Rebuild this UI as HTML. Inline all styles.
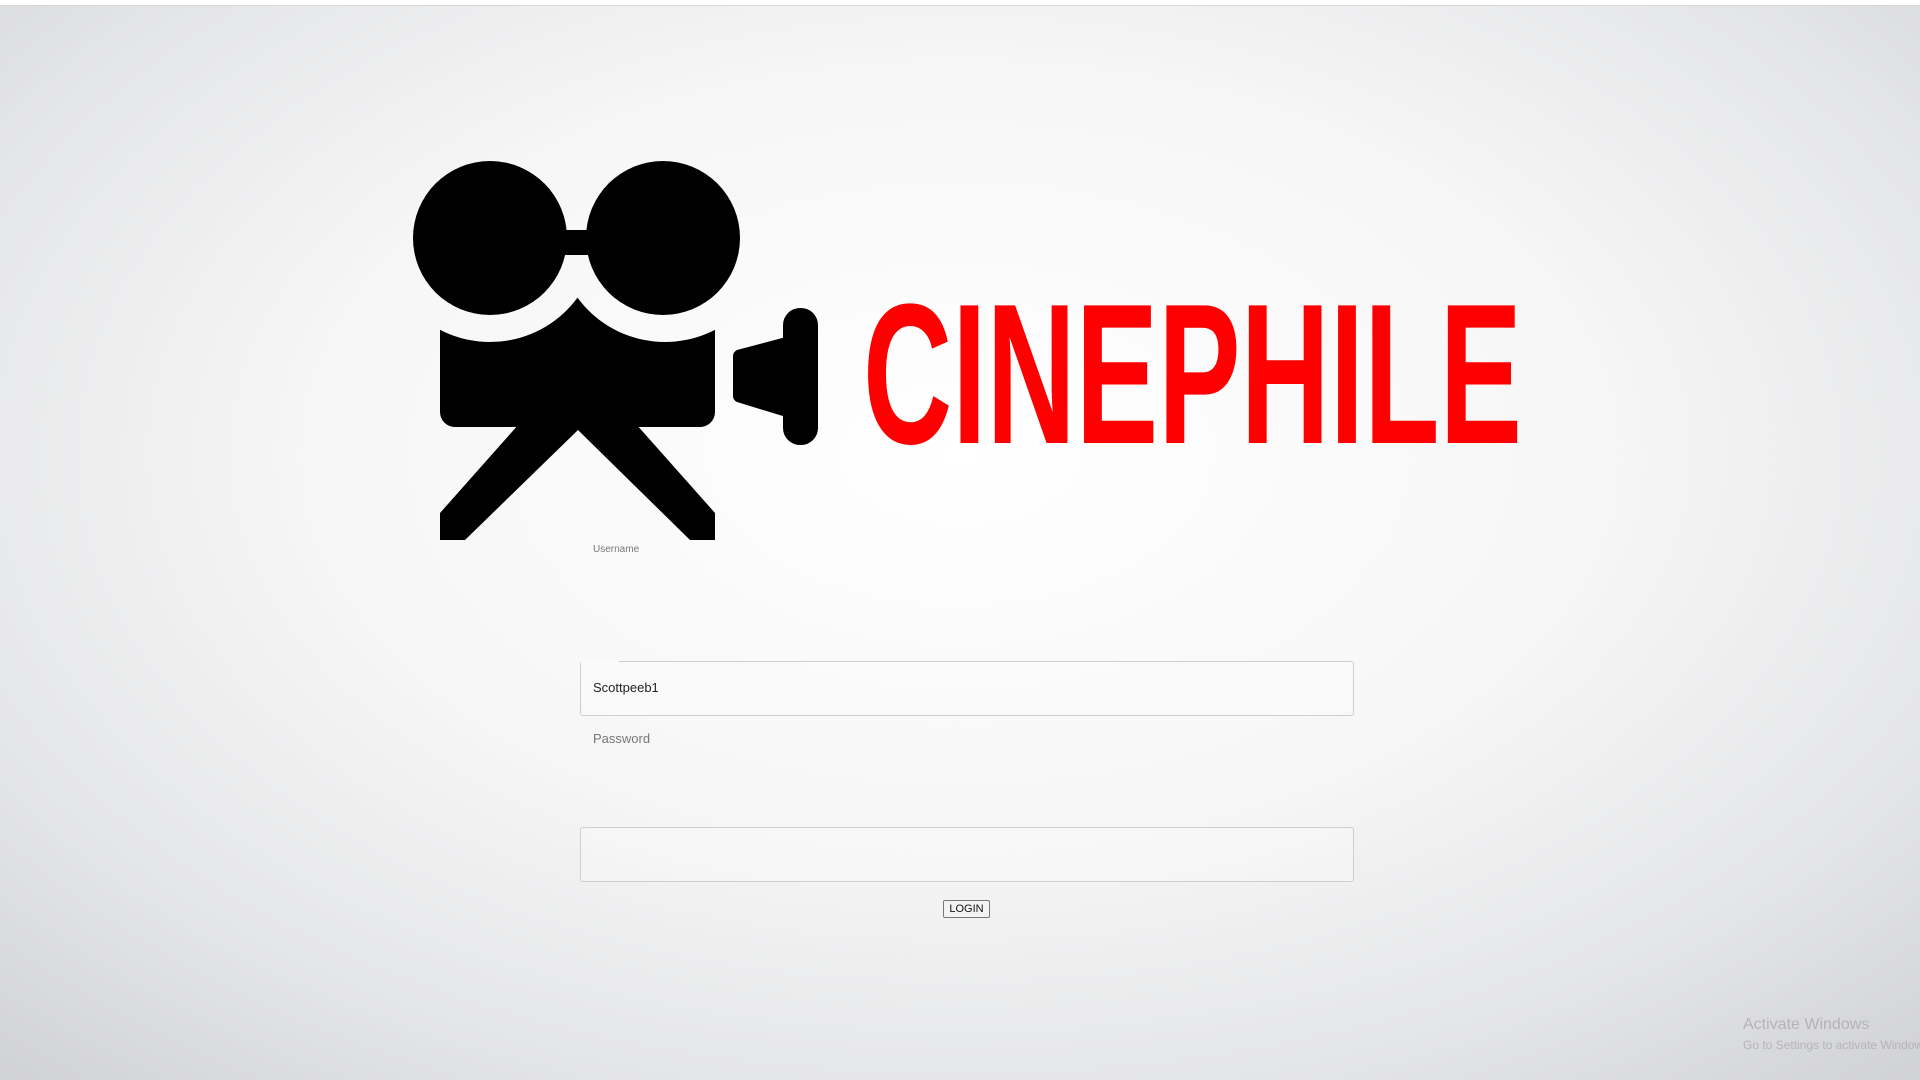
<!DOCTYPE html>
<html><head><meta charset="utf-8"><style>
html,body{margin:0;padding:0;width:1920px;height:1080px;overflow:hidden;font-family:"Liberation Sans",sans-serif}
body{background:radial-gradient(ellipse 75% 80% at 50% 42%,#ffffff 0%,#f6f6f6 45%,#e4e5e7 75%,#cfd0d3 100%);position:relative}
.top{position:absolute;left:0;top:0;width:1920px;height:5px;background:#fff;border-bottom:1px solid #d8d8d8}
.abs{position:absolute}
.inp{position:absolute;left:580px;width:772px;height:53px;border:1px solid #cfcfcf;border-radius:3px;background:rgba(255,255,255,0.25)}
</style></head><body>
<div class="top"></div>
<svg class="abs" style="left:0;top:0" width="1920" height="1080">
<defs><mask id="m"><rect x="0" y="0" width="1920" height="1080" fill="#fff"/><circle cx="490" cy="233.5" r="108.5" fill="#000"/><circle cx="665" cy="233.5" r="108.5" fill="#000"/></mask></defs>
<rect x="440" y="280" width="275" height="147" rx="15" fill="#000" mask="url(#m)"/>
<circle cx="490" cy="238" r="77" fill="#000"/>
<circle cx="663" cy="238" r="77" fill="#000"/>
<rect x="562" y="230" width="30" height="25" fill="#000"/>
<rect x="783" y="308" width="35" height="137" rx="17" fill="#000"/>
<path d="M737 350 L786 337 L786 417 L737 402 Q733 400 733 396 L733 356 Q733 352 737 350Z" fill="#000"/>
<polygon points="527,415 578,415 578,430 465,540 440,540 440,513" fill="#000"/>
<polygon points="578,415 628,415 715,513 715,540 690,540 578,430" fill="#000"/>
<text x="863" y="443" font-family="Liberation Sans, sans-serif" font-weight="bold" font-size="200" fill="#ff0000" textLength="659" lengthAdjust="spacingAndGlyphs">CINEPHILE</text>
</svg>
<div class="abs" style="left:593px;top:544px;font-size:10px;color:#777">Username</div>
<div class="inp" style="top:661px"></div>
<div class="abs" style="left:581px;top:658px;width:38px;height:5px;background:#fafafa"></div>
<div class="abs" style="left:593px;top:680px;font-size:13px;color:#222">Scottpeeb1</div>
<div class="abs" style="left:593px;top:731px;font-size:13px;color:#777">Password</div>
<div class="inp" style="top:827px"></div>
<div class="abs" style="left:943px;top:900px;width:45px;height:16px;border:1px solid #777;border-radius:2px;background:#f3f3f3;font-size:11px;line-height:16px;text-align:center;color:#111">LOGIN</div>
<div class="abs" style="left:1743px;top:1016px;font-size:16px;color:#b4b4b6;white-space:nowrap">Activate Windows</div>
<div class="abs" style="left:1743px;top:1038px;font-size:12px;color:#b4b4b6;white-space:nowrap">Go to Settings to activate Windows.</div>
</body></html>
